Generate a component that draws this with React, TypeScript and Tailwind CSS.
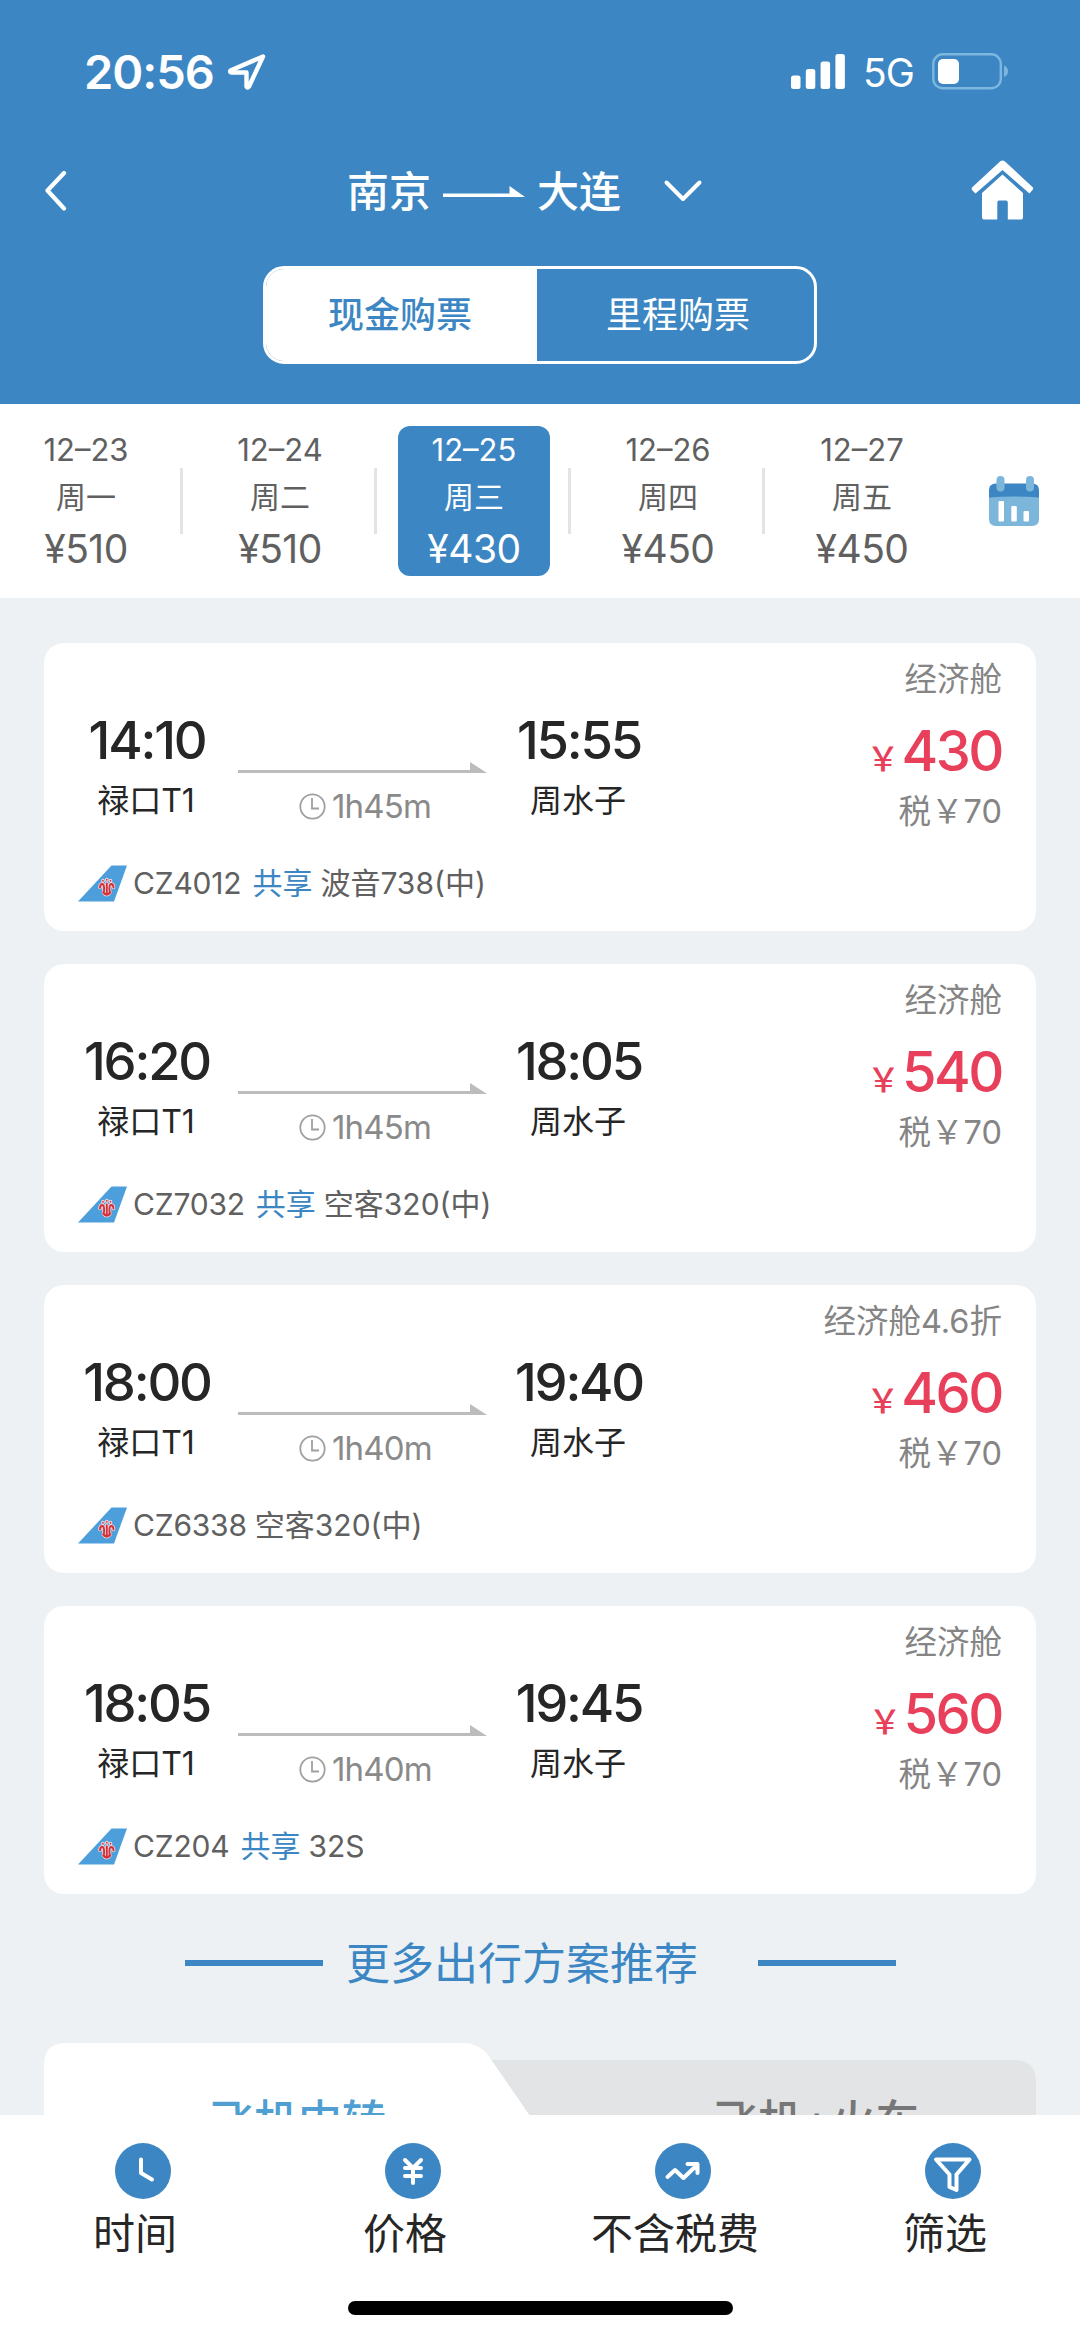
import clsx from 'clsx'

interface DayFare {
  date: string
  week: string
  price: number
}

interface Flight {
  depTime: string
  depPlace: string
  arrTime: string
  arrPlace: string
  duration: string
  flightNo: string
  shared: boolean
  plane: string
  cabin: string
  price: number
  tax: number
}

const days: DayFare[] = [
  { date: '12–23', week: '周一', price: 510 },
  { date: '12–24', week: '周二', price: 510 },
  { date: '12–25', week: '周三', price: 430 },
  { date: '12–26', week: '周四', price: 450 },
  { date: '12–27', week: '周五', price: 450 },
]

const flights: Flight[] = [
  { depTime: '14:10', depPlace: '禄口T1', arrTime: '15:55', arrPlace: '周水子', duration: '1h45m', flightNo: 'CZ4012', shared: true, plane: '波音738(中)', cabin: '经济舱', price: 430, tax: 70 },
  { depTime: '16:20', depPlace: '禄口T1', arrTime: '18:05', arrPlace: '周水子', duration: '1h45m', flightNo: 'CZ7032', shared: true, plane: '空客320(中)', cabin: '经济舱', price: 540, tax: 70 },
  { depTime: '18:00', depPlace: '禄口T1', arrTime: '19:40', arrPlace: '周水子', duration: '1h40m', flightNo: 'CZ6338', shared: false, plane: '空客320(中)', cabin: '经济舱4.6折', price: 460, tax: 70 },
  { depTime: '18:05', depPlace: '禄口T1', arrTime: '19:45', arrPlace: '周水子', duration: '1h40m', flightNo: 'CZ204', shared: true, plane: '32S', cabin: '经济舱', price: 560, tax: 70 },
]

function StatusBar() {
  return (
    <div className="flex h-[144px] items-start pt-[42px] pl-[84px] pr-[71px]">
      <span className="w-[132px] text-[47px] leading-[60px] font-semibold tracking-[-1px]">20:56</span>
      <svg className="mt-[11px] ml-[11px]" width="40" height="38" viewBox="0 0 40 38" fill="none" stroke="#fff" strokeWidth="4.4" strokeLinejoin="round">
        <path d="M36 3.5 L3.5 17.5 Q2.500 19.500 4.500 19.500 L19.500 19.500 L19.500 33.500 Q20.500 35.500 22 33.500 Z" />
      </svg>
      <svg className="mt-[12px] ml-auto" width="54" height="35" viewBox="0 0 54 35" fill="#fff">
        <rect x="0" y="21.500" width="9.500" height="13.500" rx="2.500" />
        <rect x="14.800" y="15" width="9.500" height="20" rx="2.500" />
        <rect x="29.600" y="7.500" width="9.500" height="27.500" rx="2.500" />
        <rect x="44.400" y="0" width="9.500" height="35" rx="2.500" />
      </svg>
      <span className="ml-[18px] w-[50px] text-[39px] leading-[62px] tracking-[-1px]">5G</span>
      <svg className="mt-[11px] ml-[19px]" width="77" height="37" viewBox="0 0 77 37">
        <rect x="1.300" y="1.300" width="67.500" height="34" rx="9.500" fill="none" stroke="#7db6de" strokeWidth="2.400" />
        <rect x="6" y="6" width="21" height="25" rx="5" fill="#fff" />
        <path d="M72 12.500 Q76 14 76 18.300 Q76 22.500 72 24 Z" fill="#7db6de" />
      </svg>
    </div>
  )
}

function Header() {
  return (
    <header className="h-[404px] bg-[#3c87c3] text-white">
      <StatusBar />
      <div className="flex h-[96px] items-center pl-[43px] pr-[46px]">
        <svg width="26" height="42" viewBox="0 0 26 42" fill="none" stroke="#fff" strokeWidth="4.200" strokeLinecap="round" strokeLinejoin="round">
          <path d="M21 2 L4.500 19.500 L21 37.500" />
        </svg>
        <div className="ml-[278px] flex items-center text-[42px] leading-[60px] font-medium">
          <span>南京</span>
          <svg className="mr-[12px] ml-[12px]" width="82" height="20" viewBox="0 0 82 20" fill="#fff">
            <path d="M0 11.500 H66.500 V4 L82 15 H0 Z" />
          </svg>
          <span>大连</span>
          <svg className="ml-[41px]" width="42" height="26" viewBox="0 0 42 26" fill="none" stroke="#fff" strokeWidth="4" strokeLinecap="round" strokeLinejoin="round">
            <path d="M4.500 3.500 L21 20 L37.500 3.500" />
          </svg>
        </div>
        <svg className="-mt-[4px] ml-auto" width="63" height="60" viewBox="0 0 63 60" fill="#fff">
          <path d="M29 1.500 Q31.500 -0.500 34 1.500 L62 27.500 Q62.500 29 61.500 30 L58.500 33.500 L31.500 10 L4.500 33.500 L1 30 Q0.300 29 1 27.500 Z" />
          <path d="M31.500 14.500 L52 33 V57.500 Q52 59.500 50 59.500 H36.800 V42.500 Q36.800 40.500 35 40.500 H28 Q26.300 40.500 26.300 42.500 V59.500 H13 Q11 59.500 11 57.500 V33 Z" />
        </svg>
      </div>
      <div className="mx-auto mt-[26px] flex h-[98px] w-[554px] overflow-hidden rounded-[21px] border-[3px] border-white text-[36px]">
        <div className="flex w-[271px] items-center justify-center bg-white pr-[3px] font-medium text-[#3c87c3]">现金购票</div>
        <div className="flex flex-1 items-center justify-center pl-[5px]">里程购票</div>
      </div>
    </header>
  )
}

function DateStrip() {
  return (
    <div className="flex h-[194px] bg-white">
      <div className="-ml-[11px] flex">
        {days.map((day, i) => {
          const active = i === 2
          return (
            <div key={day.date} className="flex w-[194px] items-center">
              <div
                className={clsx(
                  'ml-[21px] flex h-[150px] w-[152px] shrink-0 flex-col items-center rounded-[12px] pt-[4px]',
                  active ? 'bg-[#3c87c3] text-white' : 'text-[#606060]',
                )}
              >
                <span className="text-[31px] leading-[40px]">{day.date}</span>
                <span className="mt-[7px] text-[30px] leading-[40px]">{day.week}</span>
                <span className="mt-[7px] text-[39px] leading-[50px] tracking-[-0.5px]">¥{day.price}</span>
              </div>
              {i < days.length - 1 && <i className="ml-[18px] h-[66px] w-[3px] shrink-0 bg-[#e3e3e3]" />}
            </div>
          )
        })}
      </div>
      <svg className="mt-[72px] ml-[30px]" width="50" height="50" viewBox="0 0 50 50">
        <path d="M0 20 V43 Q0 50 7 50 H43 Q50 50 50 43 V20 Z" fill="#7db6db" />
        <path d="M0 21.500 V14 Q0 7.500 7 7.500 H43 Q50 7.500 50 14 V21.500 Q25 19.500 0 21.500 Z" fill="#3c87c3" />
        <rect x="7.500" y="0" width="8" height="15.500" rx="4" fill="#7db6db" />
        <rect x="37" y="0" width="8" height="15.500" rx="4" fill="#7db6db" />
        <rect x="9.500" y="25" width="5.500" height="20.500" rx="1" fill="#fff" />
        <rect x="22.300" y="30" width="5.500" height="15.500" rx="1" fill="#fff" />
        <rect x="34.500" y="35" width="5.500" height="10.500" rx="1" fill="#fff" />
      </svg>
    </div>
  )
}

function TailLogo() {
  return (
    <svg width="49" height="37" viewBox="0 0 49 37">
      <path d="M0 36.500 L33.500 0.500 H49 L36 36.500 Z" fill="#4c9fdb" />
      {/* kapok flower */}
      <g fill="none" stroke="#f1dbe1" strokeWidth="3.600" strokeLinecap="round">
        <path d="M22 22.500 Q22 19 24.500 19 Q26.500 19.500 26 26 M35.500 22.500 Q35.500 19 33 19 Q31 19.500 31.500 26 M28.800 18.500 V28 M25.500 27.500 Q28.800 32 32 27.500 M25 15.500 V16 M28.800 14.500 V15 M32.500 15.500 V16" />
      </g>
      <g fill="none" stroke="#d3303a" strokeWidth="1.900" strokeLinecap="round">
        <path d="M22 22.500 Q22 19 24.500 19 Q26.500 19.500 26 26" />
        <path d="M35.500 22.500 Q35.500 19 33 19 Q31 19.500 31.500 26" />
        <path d="M28.800 18.500 V28" />
        <path d="M25.500 27.500 Q28.800 31.500 32 27.500" strokeWidth="2.600" />
        <path d="M25 15.500 V16 M28.800 14.500 V15 M32.500 15.500 V16" strokeWidth="1.600" />
      </g>
    </svg>
  )
}

function FlightCard({ flight }: { flight: Flight }) {
  return (
    <div className="h-[288px] rounded-[20px] bg-white">
      <div className="flex h-[218px]">
        <div className="ml-[22px] flex w-[160px] flex-col items-center pt-[67px] text-[#262626]">
          <span className="pl-[2px] text-[52.500px] leading-[60px] font-medium tracking-[-2.200px]">{flight.depTime}</span>
          <span className="mt-[11px] text-[32px] leading-[40px]">{flight.depPlace}</span>
        </div>
        <div className="ml-[12px] flex w-[249px] flex-col pt-[119px] text-[#8a8a8a]">
          <svg width="249" height="12" viewBox="0 0 249 12" fill="#bcbcbc">
            <path d="M0 8 H232 V0 L249 11 H0 Z" />
          </svg>
          <div className="mt-[12px] flex items-center pl-[61px]">
            <svg width="27" height="27" viewBox="0 0 27 27" fill="none" stroke="#a0a0a0" strokeWidth="1.800">
              <circle cx="13.500" cy="13.500" r="12.200" />
              <path d="M13 5 V15.500 H20" />
            </svg>
            <span className="ml-[6px] text-[33px] leading-[40px] tracking-[-0.8px]">{flight.duration}</span>
          </div>
        </div>
        <div className="ml-[11px] flex w-[160px] flex-col items-center pt-[67px] text-[#262626]">
          <span className="pl-[2px] text-[52.500px] leading-[60px] font-medium tracking-[-2.200px]">{flight.arrTime}</span>
          <span className="mt-[11px] text-[32px] leading-[40px]">{flight.arrPlace}</span>
        </div>
        <div className="ml-auto flex flex-col items-end pt-[17px] pr-[34px] text-[32.500px] leading-[40px] text-[#858585]">
          <span>{flight.cabin}</span>
          <span className="mt-[21px] flex items-baseline font-medium text-[#e83f5b]">
            <span className="mr-[2px] mb-[2px] text-[33px]">￥</span>
            <span className="text-[56px] leading-[60px] tracking-[-2.500px]">{flight.price}</span>
          </span>
          <span className="mt-[11px]">税￥{flight.tax}</span>
        </div>
      </div>
      <div className="flex h-[44px] items-center pl-[34px] text-[30px] text-[#606060]">
        <TailLogo />
        <span className="ml-[6px] tracking-[-0.2px]">{flight.flightNo}</span>
        {flight.shared && <span className="ml-[11px] text-[#3c87c3]">共享</span>}
        <span className="ml-[8px]">{flight.plane}</span>
      </div>
    </div>
  )
}

function MorePlans() {
  return (
    <section>
      <div className="mt-[44px] flex h-[50px] items-center pl-[185px] text-[#3c87c3]">
        <i className="h-[6px] w-[138px] bg-[#3c87c3]" />
        <span className="mt-[2px] ml-[23px] text-[44px] leading-[50px]">更多出行方案推荐</span>
        <i className="ml-[60px] h-[6px] w-[138px] bg-[#3c87c3]" />
      </div>
      <div className="relative mx-[44px] mt-[55px] flex h-[140px] text-[44px] leading-[60px] font-medium">
        <svg className="absolute inset-0" width="992" height="140" viewBox="0 0 992 140">
          <path d="M400 17 H970 Q992 17 992 39 V140 H400 Z" fill="#e2e4e5" />
          <path d="M0 140 V22 Q0 0 22 0 H419 Q437 0 447.500 17 L532 140 Z" fill="#fff" />
        </svg>
        <div className="relative ml-[166px] w-[178px] pt-[48px] text-[#4f9fd2]">飞机中转</div>
        <div className="relative ml-[326px] pt-[48px] text-[#777777]">飞机+火车</div>
      </div>
    </section>
  )
}

function ClockIcon() {
  return <path d="M26 16.500 V30 L37 36.500" />
}

function YenIcon() {
  return <path d="M20 17 L28 25 L36 17 M20 25 H36 M20 33 H36 M28 25 V40" />
}

function TrendIcon() {
  return <path d="M12.500 34 L20 27 L28.500 35 L42 22 M32.500 21 H42.500 V30" />
}

function FunnelIcon() {
  return <path d="M11 16.500 H44.500 L31.500 31.500 V47 L24.500 44 V31.500 Z" />
}

const sorters = [
  { label: '时间', icon: <ClockIcon /> },
  { label: '价格', icon: <YenIcon /> },
  { label: '不含税费', icon: <TrendIcon /> },
  { label: '筛选', icon: <FunnelIcon /> },
]

function BottomBar() {
  return (
    <footer className="relative h-[222px] shrink-0 bg-white">
      <div className="grid grid-cols-4 pt-[28px]">
        {sorters.map(item => (
          <button key={item.label} className="flex flex-col items-center text-[#262626]">
            <svg className="ml-[16px]" width="56" height="56" viewBox="0 0 56 56" fill="none" stroke="#fff" strokeWidth="4" strokeLinecap="round" strokeLinejoin="round">
              <circle cx="28" cy="28" r="28" fill="#3c87c3" stroke="none" />
              {item.icon}
            </svg>
            <span className="mt-[9px] text-[42px] leading-[52px]">{item.label}</span>
          </button>
        ))}
      </div>
      <div className="mx-auto mt-[41px] h-[14px] w-[385px] rounded-full bg-black" />
    </footer>
  )
}

export default function App() {
  return (
    <div className="flex h-[2337px] w-[1080px] flex-col overflow-hidden bg-[#edf1f4] font-[Inter,'Noto_Sans_CJK_SC',sans-serif]">
      <Header />
      <DateStrip />
      <main className="min-h-0 flex-1 overflow-hidden">
        <div className="flex flex-col gap-[33px] px-[44px] pt-[45px]">
          {flights.map(flight => (
            <FlightCard key={flight.flightNo} flight={flight} />
          ))}
        </div>
        <MorePlans />
      </main>
      <BottomBar />
    </div>
  )
}
